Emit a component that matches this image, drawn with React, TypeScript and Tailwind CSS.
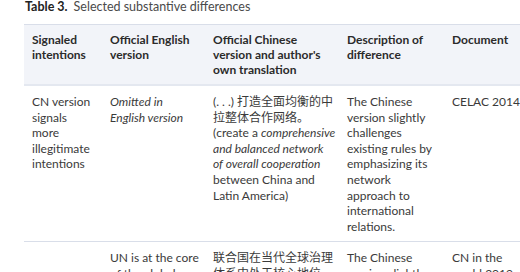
import React from "react"

type Row = {
  intention: string[]
  english: string[]
  chinese: React.ReactNode
  description: string[]
  document: string[]
}

const rows: Row[] = [
  {
    intention: ["CN version", "signals", "more", "illegitimate", "intentions"],
    english: ["Omitted in", "English version"],
    chinese: (
      <>
        (. . .) 打造全面均衡的中
        <br />
        拉整体合作网络。
        <br />
        (create a <em>comprehensive</em>
        <br />
        <em>and balanced network</em>
        <br />
        <em>of overall cooperation</em>
        <br />
        between China and
        <br />
        Latin America)
      </>
    ),
    description: ["The Chinese", "version slightly", "challenges", "existing rules by", "emphasizing its", "network", "approach to", "international", "relations."],
    document: ["CELAC 2014"],
  },
  {
    intention: [],
    english: ["UN is at the core", "of the global"],
    chinese: (
      <>
        联合国在当代全球治理
        <br />
        体系中处于核心地位
      </>
    ),
    description: ["The Chinese", "version slightly"],
    document: ["CN in the", "world 2019"],
  },
]

function Lines({ items, italic }: { items: string[]; italic?: boolean }) {
  return (
    <>
      {items.map((t, i) => (
        <div key={i} className={italic ? "italic" : ""}>
          {t}
        </div>
      ))}
    </>
  )
}

const font = { fontFamily: "'Source Sans Pro', Lato, 'Noto Sans CJK SC', sans-serif" }

export default function App() {
  return (
    <div
      className="w-[520px] h-[272px] overflow-hidden bg-white text-[#3a3a3a] text-[12px] leading-[15.6px]"
      style={font}
    >
      <div className="pl-[25px] h-[24px] text-[12.5px] leading-[14px] text-[#4a4a4a]">
        <span className="font-bold text-[#222]">Table 3.</span>
        <span className="ml-[6px]">Selected substantive differences</span>
      </div>
      <table className="ml-[24px] w-[560px] table-fixed border-collapse whitespace-nowrap">
        <colgroup>
          <col className="w-[78px]" />
          <col className="w-[103px]" />
          <col className="w-[134px]" />
          <col className="w-[105px]" />
          <col className="w-[140px]" />
        </colgroup>
        <thead>
          <tr className="bg-[#f2f4f9] border-t border-[#d9dee9] border-b-[2px] border-b-[#e4e8f0] align-top text-left font-bold text-[#2b2b2b] leading-[15px]">
            <th className="px-[8px] pt-[7px] pb-[7px]">Signaled<br />intentions</th>
            <th className="px-[8px] pt-[7px] pb-[7px]">Official English<br />version</th>
            <th className="px-[8px] pt-[7px] pb-[7px]">Official Chinese<br />version and author's<br />own translation</th>
            <th className="px-[8px] pt-[7px] pb-[7px]">Description of<br />difference</th>
            <th className="px-[8px] pt-[7px] pb-[7px]">Document</th>
          </tr>
        </thead>
        <tbody>
          {rows.map((r, i) => (
            <tr key={i} className="align-top border-b border-[#d9dee9]">
              <td className="px-[8px] pt-[8px] pb-[7px]"><Lines items={r.intention} /></td>
              <td className="px-[8px] pt-[8px] pb-[7px]"><Lines items={r.english} italic={i === 0} /></td>
              <td className="px-[8px] pt-[8px] pb-[7px]">{r.chinese}</td>
              <td className="px-[8px] pt-[8px] pb-[7px]"><Lines items={r.description} /></td>
              <td className="px-[8px] pt-[8px] pb-[7px]"><Lines items={r.document} /></td>
            </tr>
          ))}
        </tbody>
      </table>
    </div>
  )
}
